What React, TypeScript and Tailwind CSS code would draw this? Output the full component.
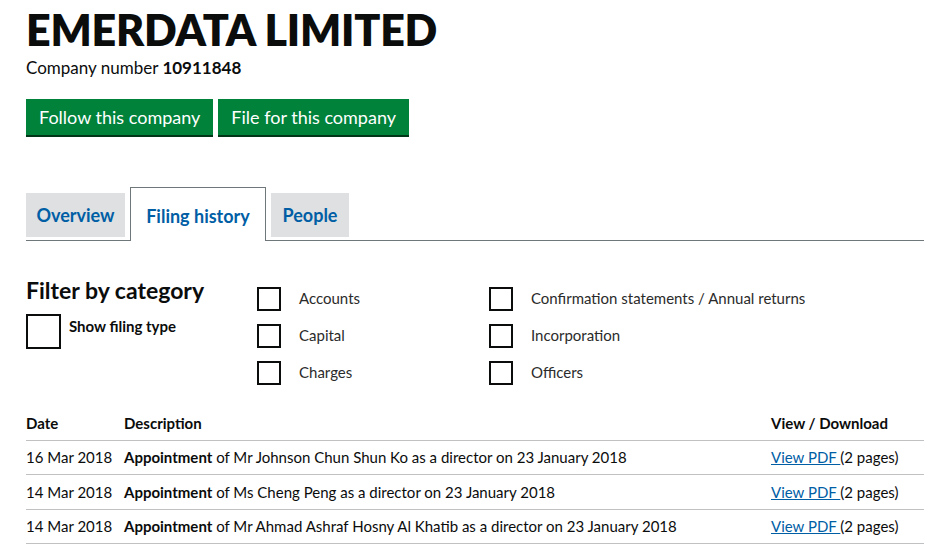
import React from "react";

const Box = ({ size = "w-6 h-6" }: { size?: string }) => (
  <span className={`${size} border-2 border-[#0b0c0c] bg-white shrink-0 block`} />
);

const cats: [string, string][] = [
  ["Accounts", "Confirmation statements / Annual returns"],
  ["Capital", "Incorporation"],
  ["Charges", "Officers"],
];

const rows = [
  ["16 Mar 2018", "of Mr Johnson Chun Shun Ko as a director on 23 January 2018"],
  ["14 Mar 2018", "of Ms Cheng Peng as a director on 23 January 2018"],
  ["14 Mar 2018", "of Mr Ahmad Ashraf Hosny Al Khatib as a director on 23 January 2018"],
];

export default function App() {
  return (
    <div
      className="w-[936px] h-[554px] overflow-hidden bg-white text-[#0b0c0c] px-[26px] pr-[12px]"
      style={{ fontFamily: '"Lato", "Open Sans", Arial, sans-serif' }}
    >
      <h1 className="text-[43px] leading-none font-extrabold tracking-[-0.2px] pt-[8px]">EMERDATA LIMITED</h1>
      <p className="text-[17px] mt-[7px] leading-5">
        Company number <b className="font-bold">10911848</b>
      </p>
      <div className="flex gap-[5px] mt-[21px]">
        <button className="h-[38px] px-[13px] bg-[#00823b] text-white text-[18px] border-b-2 border-[#003618]">
          Follow this company
        </button>
        <button className="h-[38px] px-[13px] bg-[#00823b] text-white text-[18px] border-b-2 border-[#003618]">
          File for this company
        </button>
      </div>

      <div className="mt-[51px] flex items-end gap-[5px] border-b border-[#6f777b] h-[53px]">
        <div className="h-[44px] mb-[3px] w-[99px] bg-[#dee0e2] flex items-center justify-center text-[#005ea5] font-bold text-[18px]">
          Overview
        </div>
        <div className="h-[54px] -mb-px w-[136px] bg-white border border-b-0 border-[#6f777b] flex items-center justify-center text-[#005ea5] font-bold text-[18px] pt-[3px]">
          Filing history
        </div>
        <div className="h-[44px] mb-[3px] w-[78px] bg-[#dee0e2] flex items-center justify-center text-[#005ea5] font-bold text-[18px]">
          People
        </div>
      </div>

      <div className="flex mt-[38px]">
        <div className="w-[231px]">
          <h2 className="text-[23px] font-bold leading-6 mt-[-1px]">Filter by category</h2>
          <div className="flex items-start gap-[8px] mt-[12px]">
            <Box size="w-[35px] h-[35px]" />
            <span className="text-[15px] font-bold mt-[1px]">Show filing type</span>
          </div>
        </div>
        <div className="flex flex-col gap-[12px] mt-[7px]">
          {cats.map(([a, b]) => (
            <div key={a} className="flex h-[25px] items-center">
              <div className="flex items-center w-[232px]">
                <Box />
                <span className="ml-[18px] text-[15px] text-[#2b2b2b]">{a}</span>
              </div>
              <div className="flex items-center">
                <Box />
                <span className="ml-[18px] text-[15px] text-[#2b2b2b]">{b}</span>
              </div>
            </div>
          ))}
        </div>
      </div>

      <table className="w-full mt-[22px] text-[15px] border-collapse">
        <thead>
          <tr className="border-b border-[#bfc1c3] h-[33px]">
            <th className="text-left font-bold w-[98px]">Date</th>
            <th className="text-left font-bold">Description</th>
            <th className="text-left font-bold w-[153px]">View / Download</th>
          </tr>
        </thead>
        <tbody>
          {rows.map(([d, t], i) => (
            <tr key={i} className="border-b border-[#bfc1c3] h-[34.5px]">
              <td>{d}</td>
              <td>
                <b className="font-bold">Appointment</b> {t}
              </td>
              <td>
                <a className="text-[#005ea5] underline">View PDF </a>(2 pages)
              </td>
            </tr>
          ))}
        </tbody>
      </table>
    </div>
  );
}
